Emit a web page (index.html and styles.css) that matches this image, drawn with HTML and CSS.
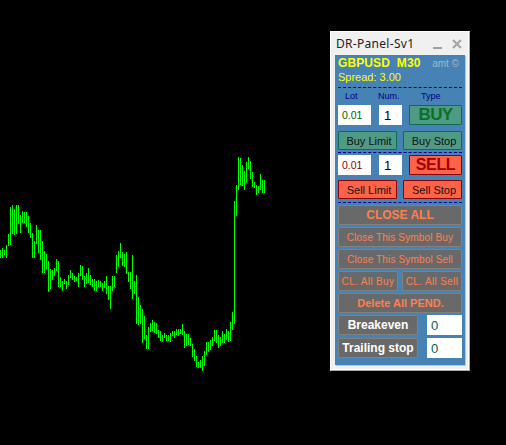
FILE: index.html
```html
<!DOCTYPE html>
<html lang="en">
<head>
<meta charset="utf-8">
<title>DR-Panel-Sv1</title>
<link rel="stylesheet" href="styles.css">
</head>
<body>
<svg class="chart" width="506" height="445" viewBox="0 0 506 445" aria-hidden="true">
<path class="bars" d="M0.5 250V258M2.5 248V258M4.5 250V255M6.5 245V258M8.5 234V246M10.5 207V245M12.5 205V234M14.5 209V235M16.5 205V234M18.5 205V224M20.5 215V233M22.5 211V223M24.5 212V223M26.5 212V227M28.5 216V233M30.5 223V238M32.5 233V258M34.5 241V258M36.5 225V244M38.5 230V253M40.5 230V260M42.5 241V273M44.5 251V273M46.5 254V269M48.5 261V292M50.5 269V289M52.5 270V280M54.5 268V276M56.5 259V271M58.5 261V287M60.5 277V287M62.5 281V291M64.5 279V284M66.5 281V289M68.5 275V285M70.5 270V278M72.5 273V280M74.5 276V282M76.5 277V281M78.5 273V287M80.5 265V276M82.5 266V280M84.5 276V287M86.5 273V284M88.5 268V283M90.5 275V285M92.5 279V287M94.5 279V291M96.5 281V291M98.5 280V287M100.5 281V287M102.5 283V291M104.5 281V288M106.5 276V294M108.5 286V300M110.5 286V309M112.5 276V291M114.5 276V287M116.5 255V273M118.5 251V267M120.5 243V258M122.5 252V266M124.5 254V267M126.5 252V274M128.5 272V282M130.5 272V289M132.5 255V299M134.5 281V294M136.5 275V324M138.5 297V325M140.5 305V324M142.5 309V343M144.5 316V339M146.5 335V349M148.5 327V349M150.5 323V332M152.5 320V331M154.5 322V333M156.5 323V334M158.5 330V338M160.5 331V341M162.5 335V342M164.5 333V338M166.5 335V341M168.5 335V341M170.5 333V342M172.5 331V336M174.5 331V338M176.5 329V335M178.5 329V336M180.5 329V334M182.5 324V335M184.5 331V348M186.5 334V346M188.5 334V345M190.5 338V346M192.5 344V357M194.5 349V361M196.5 356V367M198.5 362V368M200.5 360V368M202.5 356V371M204.5 351V366M206.5 342V355M208.5 342V352M210.5 340V350M212.5 337V346M214.5 330V341M216.5 330V343M218.5 335V348M220.5 337V346M222.5 331V343M224.5 334V343M226.5 329V340M228.5 331V342M230.5 322V341M232.5 312V330M234.5 201V324M236.5 185V216M238.5 157V190M240.5 158V185M242.5 165V186M244.5 171V190M246.5 162V183M248.5 157V169M250.5 161V179M252.5 172V187M254.5 182V188M256.5 185V195M258.5 186V193M260.5 174V190M262.5 180V193M264.5 180V193"/>
</svg>
<section class="window">
  <header class="titlebar">
    <span class="title">DR-Panel-Sv1</span>
    <span class="winbtn min"></span>
    <svg class="winbtn close" width="10" height="10" viewBox="0 0 10 10" aria-hidden="true"><path d="M1 1L9 9M9 1L1 9"/></svg>
  </header>
  <div class="panel">
    <div class="symbol-row"><span class="symbol">GBPUSD&nbsp; M30</span><span class="amt">amt ©</span></div>
    <div class="spread">Spread: 3.00</div>
    <hr class="dash first">
    <div class="labels"><span class="lb-lot">Lot</span><span class="lb-num">Num.</span><span class="lb-type">Type</span></div>
    <div class="row order-row">
      <span class="field lot buy-lot">0.01</span>
      <span class="field num">1</span>
      <span class="btn big buy">BUY</span>
    </div>
    <div class="row pair">
      <span class="btn buy pend">Buy Limit</span>
      <span class="btn buy pend">Buy Stop</span>
    </div>
    <hr class="dash">
    <div class="row order-row">
      <span class="field lot sell-lot">0.01</span>
      <span class="field num">1</span>
      <span class="btn big sell">SELL</span>
    </div>
    <div class="row pair sell-pair">
      <span class="btn sell pend">Sell Limit</span>
      <span class="btn sell pend">Sell Stop</span>
    </div>
    <hr class="dash third">
    <div class="btn close-all gray">CLOSE ALL</div>
    <div class="btn gray symbol-btn">Close This Symbol Buy</div>
    <div class="btn gray symbol-btn">Close This Symbol Sell</div>
    <div class="row cl-row">
      <span class="btn gray cl">CL. All Buy</span>
      <span class="btn gray cl">CL. All Sell</span>
    </div>
    <div class="btn gray delete">Delete All PEND.</div>
    <div class="row stop-row">
      <span class="btn gray white">Breakeven</span>
      <span class="field stop">0</span>
    </div>
    <div class="row stop-row trailing">
      <span class="btn gray white">Trailing stop</span>
      <span class="field stop">0</span>
    </div>
  </div>
</section>
</body>
</html>
```
FILE: styles.css
```css
* { box-sizing: border-box; }
html, body { margin: 0; padding: 0; height: 100%; background: #000; overflow: hidden; }
body { font-family: "Liberation Sans", Arial, sans-serif; }

.chart { display: block; position: absolute; left: 0; top: 0; }
.bars { stroke: #00ff00; stroke-width: 1; fill: none; shape-rendering: crispEdges; }

.window {
  position: absolute; left: 330px; top: 31px; width: 140px; height: 340px;
  background: #f0f0f0; border: 1px solid; border-color: #fff #a8a8a8 #a8a8a8 #fff;
  box-shadow: inset -1px -1px 0 #fff;
  padding: 0 4px;
  display: flex; flex-direction: column;
}
.titlebar { height: 23px; display: flex; align-items: center; flex: none; }
.title { font-family: "Noto Sans", sans-serif; font-size: 12px; letter-spacing: 0.3px; color: #222; margin-left: 1px; flex: 1; }
.winbtn { flex: none; }
.min { width: 9px; height: 2px; background: #a0a0a0; margin-top: 8px; margin-right: 10px; }
.close { margin-right: 3px; }
.close path { stroke: #a8a8a8; stroke-width: 2.4; fill: none; }

.panel {
  width: 130px; height: 310px; flex: none; background: #4682b4;
  box-shadow: 1px 1px 0 #c4c4c4;
  padding: 0 3px; display: flex; flex-direction: column;
}
.symbol-row { display: flex; justify-content: space-between; height: 16px; align-items: center; }
.symbol { font-size: 12px; font-weight: bold; color: #ffff00; letter-spacing: 0.1px; }
.amt { font-size: 10px; color: #a4b8cc; margin-right: 3px; }
.spread { font-size: 11px; color: #ffff00; line-height: 13px; }
.dash { border: 0; border-top: 1px dashed #00008b; margin: 2px 0 2px; height: 0; width: 124px; flex: none; }
.dash.first { margin: 3px 0 1px; }
.dash.third { margin-top: 3px; }

.labels { display: flex; height: 14px; align-items: center; font-size: 9px; color: #00008b; margin-bottom: 2px; }
.lb-lot { margin-left: 7px; width: 33px; }
.lb-num { width: 43px; }

.row { display: flex; flex: none; }
.order-row { height: 20px; justify-content: flex-start; }
.field { background: #fff; display: flex; align-items: center; height: 20px; flex: none; }
.lot { width: 33px; padding-left: 4px; font-size: 10.5px; }
.buy-lot { color: #006400; }
.sell-lot { color: #8b0000; }
.num { width: 23px; margin-left: 8px; padding-left: 5px; color: #000; font-size: 13px; }

.btn { display: flex; align-items: center; justify-content: center; border: 1px solid; flex: none; border-radius: 1px; }
.big { width: 53px; margin-left: 7px; font-weight: bold; }
.buy { background: #4f9a84; border-color: #0a6e50; }
.big.buy { color: #0a7028; font-size: 17px; letter-spacing: -0.6px; }
.sell { background: #ff6347; border-color: #8b0000; }
.big.sell { color: #a00000; font-size: 16px; letter-spacing: -0.4px; }
.pair { height: 19px; margin-top: 6px; justify-content: space-between; width: 124px; }
.sell-pair { margin-top: 5px; }
.pend { width: 59px; font-size: 11px; color: #111; padding-left: 3px; }

.gray { background: #696969; border-color: #808080; color: #ff7f50; height: 20px; width: 124px; }
.close-all { font-size: 12px; font-weight: bold; }
.symbol-btn { font-size: 10px; letter-spacing: 0.15px; margin-top: 2px; }
.cl-row { width: 124px; justify-content: space-between; margin-top: 2px; }
.cl { width: 60px; font-size: 10px; letter-spacing: 0.35px; }
.delete { font-size: 11px; font-weight: bold; margin-top: 2px; padding-left: 1px; }
.stop-row { height: 20px; width: 124px; justify-content: space-between; margin-top: 2px; }
.trailing { margin-top: 3px; }
.white { width: 80px; color: #fff; font-size: 12px; font-weight: bold; }
.stop { width: 35px; padding-left: 4px; color: #006060; font-size: 13px; }
```
